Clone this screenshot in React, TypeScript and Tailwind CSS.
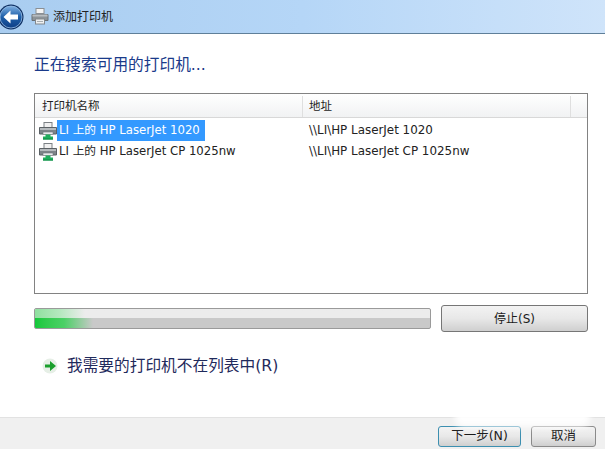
const F = { fontFamily: '"DejaVu Sans","Noto Sans CJK SC",sans-serif' };

function PrinterSmall({ className }: { className?: string }) {
  return (
    <svg viewBox="0 0 18 17" width="18" height="17" className={className}>
      <rect x="5" y="0.5" width="8" height="5" fill="#f4f4f4" stroke="#8a8f94" />
      <path d="M1 6.5h16v6H1z" fill="#8d9499" stroke="#6a7075" />
      <rect x="1.5" y="6.5" width="15" height="2" fill="#b9bec2" />
      <rect x="4.5" y="11" width="9" height="5" fill="#eef0f1" stroke="#83888c" />
      <rect x="6" y="13" width="6" height="1" fill="#a8adb0" />
    </svg>
  );
}

function PrinterNet() {
  return (
    <svg viewBox="0 0 18 18" width="18" height="18" className="shrink-0">
      <rect x="5" y="0.5" width="8" height="5" fill="#f0f0f0" stroke="#7c8185" />
      <path d="M0.5 5.5h17v6.5H0.5z" fill="#7d8488" stroke="#5b6165" />
      <rect x="1" y="6" width="16" height="2" fill="#b5babd" />
      <rect x="4" y="10" width="10" height="2.5" fill="#e8eaeb" stroke="#70767a" strokeWidth="0.6" />
      <path d="M6.5 12.5h5v2.5h-5z" fill="#1fae5c" />
      <path d="M4 14.5h10v3H4z" fill="#1fae5c" />
      <rect x="4" y="16.5" width="10" height="1" fill="#0c8a42" />
    </svg>
  );
}

function BackButton() {
  return (
    <svg viewBox="0 0 26 26" width="26" height="26" className="shrink-0">
      <defs>
        <linearGradient id="bk" x1="0" y1="0" x2="0" y2="1">
          <stop offset="0" stopColor="#7fb0e2" />
          <stop offset="0.5" stopColor="#1d5ea8" />
          <stop offset="1" stopColor="#0f3f86" />
        </linearGradient>
      </defs>
      <circle cx="13" cy="13" r="12.5" fill="#0d2f63" />
      <circle cx="13" cy="13" r="11" fill="url(#bk)" stroke="#9cc3ea" strokeWidth="0.8" />
      <path d="M5.5 13 L12.5 6.5 V10.5 H20 V15.5 H12.5 V19.5 Z" fill="#fff" />
    </svg>
  );
}

function GreenArrow() {
  return (
    <svg viewBox="0 0 16 16" width="16" height="16" className="shrink-0">
      <circle cx="8" cy="8" r="7.5" fill="#e6efe6" />
      <path d="M3 6.5H8V3l6 5-6 5V9.5H3z" fill="#1a9f2c" />
    </svg>
  );
}

function Btn({ label, className }: { label: string; className: string }) {
  return (
    <div className={`flex items-center justify-center rounded-[3px] bg-gradient-to-b from-[#f3f3f3] via-[#e8e8e8] to-[#cfcfcf] text-[#1a1a1a] ${className}`}>
      {label}
    </div>
  );
}

function Row({ name, addr, selected }: { name: string; addr: string; selected?: boolean }) {
  return (
    <div className="flex h-[21px] items-center text-[#222]">
      <div className="flex w-[274px] items-center pl-[4px] text-[11.7px]">
        <PrinterNet />
        <span className={`flex h-[21px] items-center whitespace-nowrap pl-[2px] pr-[5px] ${selected ? "bg-[#3399ff] text-white" : ""}`}>{name}</span>
      </div>
      <span className="whitespace-nowrap text-[11.9px]">{addr}</span>
    </div>
  );
}

export default function App() {
  return (
    <div className="relative flex h-[449px] w-[605px] flex-col overflow-hidden bg-white" style={F}>
      <header className="flex h-[34px] shrink-0 items-center border-b border-[#5f7f99] bg-gradient-to-r from-[#a9cdf0] via-[#b5d6f7] to-[#cfe4fa]">
        <div className="-ml-[2px] flex items-center">
          <BackButton />
        </div>
        <PrinterSmall className="ml-[7px]" />
        <span className="ml-[4px] text-[12px] text-[#222]">添加打印机</span>
      </header>

      <main className="flex flex-1 flex-col pl-[34px] pr-[17px]">
        <h1 className="mt-[20px] text-[15.7px] leading-[22px] text-[#1a3a8a]">正在搜索可用的打印机...</h1>

        <div className="mt-[17px] h-[201px] border border-[#828282]">
          <div className="flex h-[24px] items-center border-b border-[#d8d8d8] bg-gradient-to-b from-white to-[#f1f2f3] pt-[2px] text-[11.5px] text-[#222]">
            <div className="flex h-full w-[268px] items-center border-r border-[#dfdfdf] pl-[7px]">打印机名称</div>
            <div className="flex h-full w-[268px] items-center border-r border-[#dfdfdf] pl-[6px]">地址</div>
          </div>
          <div className="pt-[2px]">
            <Row selected name="LI 上的 HP LaserJet 1020" addr="\\LI\HP LaserJet 1020" />
            <Row name="LI 上的 HP LaserJet CP 1025nw" addr="\\LI\HP LaserJet CP 1025nw" />
          </div>
        </div>

        <div className="mt-[11px] flex items-center justify-between">
          <div className="relative h-[21px] w-[397px] overflow-hidden rounded-[2px] border border-[#9a9a9a] bg-gradient-to-b from-[#ececec] from-45% to-[#c9c9c9] to-45%">
            <div className="absolute inset-x-0 top-0 h-[9px] w-[50px] bg-gradient-to-r from-[#8fe09f] via-[#b5e8bf] to-transparent" />
            <div className="absolute bottom-0 left-0 h-[10px] w-[58px] bg-gradient-to-r from-[#12c83a] via-[#4bd066] to-transparent" />
          </div>
          <Btn label="停止(S)" className="h-[27px] w-[147px] border border-[#767676] text-[12px]" />
        </div>

        <div className="mt-[24px] flex items-center pl-[8px]">
          <GreenArrow />
          <span className="ml-[9px] text-[15.7px] leading-[20px] text-[#1f2a5c]">我需要的打印机不在列表中(R)</span>
        </div>
      </main>

      <footer className="flex h-[32px] shrink-0 items-end justify-end gap-[10px] border-t border-[#e2e2e2] bg-[#f0f0f0] pb-[2px] pr-[9px] text-[12.5px]">
        <Btn label="下一步(N)" className="h-[21px] w-[83px] border border-[#3c8fb0]" />
        <Btn label="取消" className="h-[21px] w-[65px] border border-[#8a8a8a]" />
      </footer>

      <div className="absolute left-[455px] top-[385px] h-[42px] w-[135px] rounded-[8px] bg-white/90 blur-[3px]" />
    </div>
  );
}
